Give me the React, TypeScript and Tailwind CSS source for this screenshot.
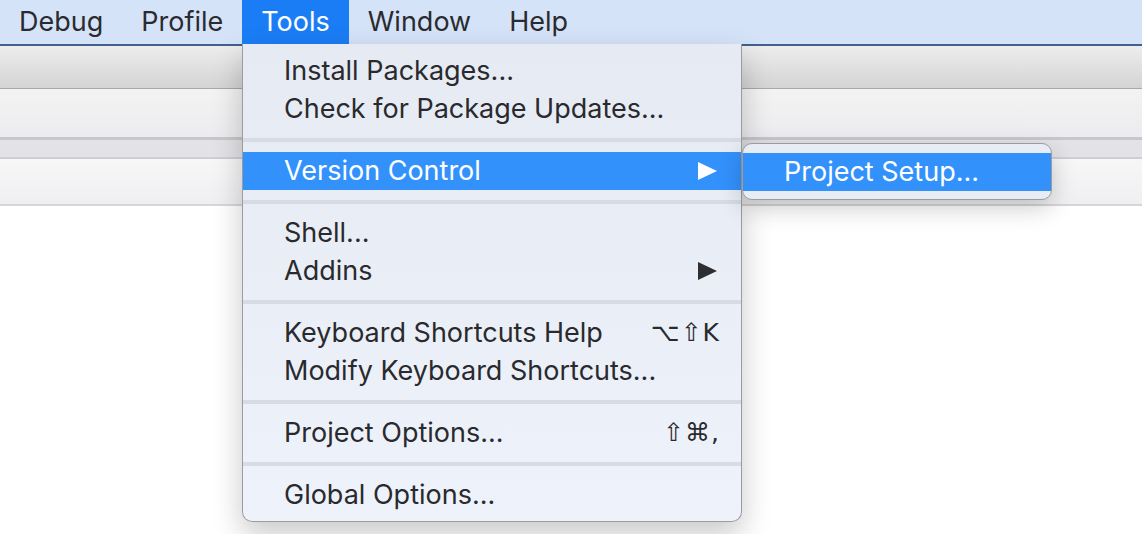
import React from 'react';

const font = { fontFamily: 'Inter, "Liberation Sans", "DejaVu Sans", sans-serif' };

type Item = { label: string; shortcut?: string; submenu?: boolean; active?: boolean };

const groups: Item[][] = [
  [{ label: 'Install Packages...' }, { label: 'Check for Package Updates...' }],
  [{ label: 'Version Control', submenu: true, active: true }],
  [{ label: 'Shell...' }, { label: 'Addins', submenu: true }],
  [
    { label: 'Keyboard Shortcuts Help', shortcut: '⌥⇧K' },
    { label: 'Modify Keyboard Shortcuts...' },
  ],
  [{ label: 'Project Options...', shortcut: '⇧⌘,' }],
  [{ label: 'Global Options...' }],
];

function Arrow({ color }: { color: string }) {
  return (
    <svg width="19" height="18" viewBox="0 0 19 18">
      <polygon points="0,0 19,9 0,18" fill={color} />
    </svg>
  );
}

function Row({ item }: { item: Item }) {
  return (
    <div
      className={
        'h-[38px] flex items-center pl-[41px] pr-[24px] text-[27px] ' +
        (item.active ? 'bg-[#3391fc] text-white' : 'text-[#2a2a2e]')
      }
    >
      <span className="flex-1">{item.label}</span>
      {item.submenu && <Arrow color={item.active ? '#ffffff' : '#2e2e32'} />}
      {item.shortcut && (
        <span className="text-[25px] -mr-[3px] tracking-[1px]" style={{ fontFamily: '"DejaVu Sans", sans-serif' }}>
          {item.shortcut}
        </span>
      )}
    </div>
  );
}

export default function App() {
  const menus = ['Debug', 'Profile', 'Tools', 'Window', 'Help'];
  return (
    <div className="relative w-[1142px] h-[534px] overflow-hidden bg-white" style={font}>
      {/* menu bar */}
      <div className="h-[44px] bg-[#d5e3f9] flex">
        {menus.map((m) => (
          <div
            key={m}
            className={
              'px-[19px] flex items-center text-[27px] ' +
              (m === 'Tools' ? 'bg-[#1b7df5] text-white' : 'text-[#2b2b2f]')
            }
          >
            {m}
          </div>
        ))}
      </div>
      <div className="h-[2px] bg-[#42608e]" />
      {/* toolbars */}
      <div className="h-[43px] bg-gradient-to-b from-[#ededed] to-[#d4d4d4] border-b border-[#a8a8a8]" />
      <div className="h-[51px] bg-gradient-to-b from-[#f3f3f4] to-[#ececee] border-b-[3px] border-[#c8c8cc]" />
      <div className="h-[19px] bg-[#e3e3e7] border-b-[2px] border-[#cfcfd3]" />
      <div className="h-[47px] bg-gradient-to-b from-[#f7f7f8] to-[#efeff1] border-b-[2px] border-[#d6d6da]" />

      {/* Tools menu */}
      <div className="absolute left-[242px] top-[44px] w-[500px] pt-[8px] pb-[7px] rounded-b-[10px] bg-gradient-to-b from-[#e6ebf3] to-[#eef3fb] border border-t-0 border-[#9a9ca0] shadow-[0_12px_30px_rgba(0,0,0,0.22)]">
        {groups.map((g, i) => (
          <div key={i}>
            {i > 0 && (
              <div className="h-[24px] flex items-center">
                <div className="w-full h-[4px] bg-[#d7dce4]" />
              </div>
            )}
            {g.map((it) => (
              <Row key={it.label} item={it} />
            ))}
          </div>
        ))}
      </div>

      {/* Version Control submenu */}
      <div className="absolute left-[742px] top-[143px] w-[310px] pt-[9px] pb-[8px] rounded-[10px] bg-[#e8edf5] border border-[#9a9ca0] shadow-[0_8px_24px_rgba(0,0,0,0.2)]">
        <div className="h-[38px] flex items-center pl-[41px] bg-[#3391fc] text-white text-[27px]">
          Project Setup...
        </div>
      </div>
    </div>
  );
}
